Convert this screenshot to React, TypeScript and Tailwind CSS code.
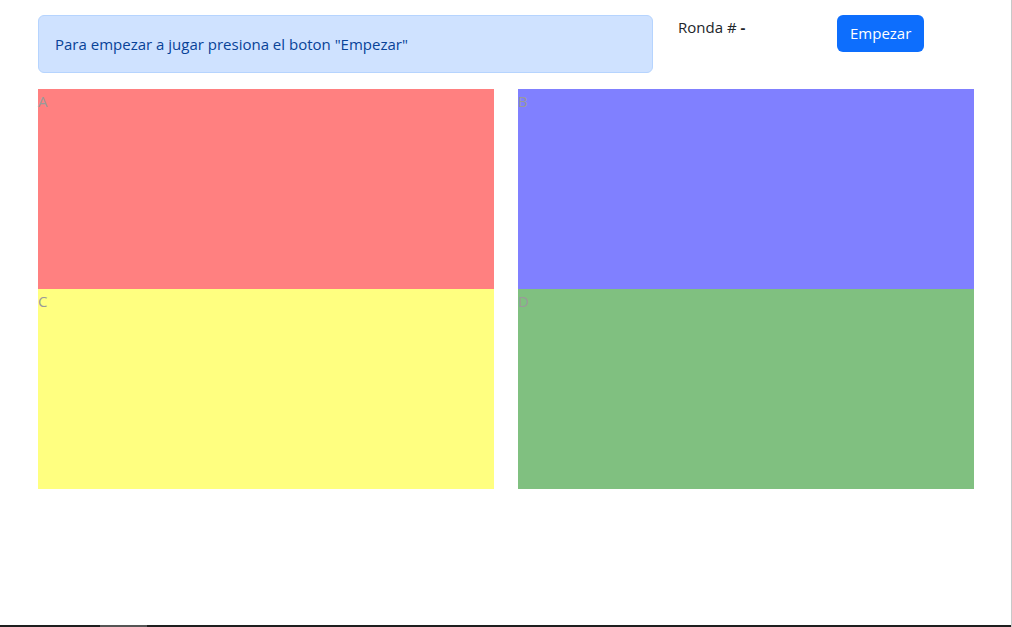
import React from 'react';

const squares = [
  { label: 'A', color: 'bg-[#ff8080]' },
  { label: 'B', color: 'bg-[#8080ff]' },
  { label: 'C', color: 'bg-[#ffff80]' },
  { label: 'D', color: 'bg-[#80c080]' },
];

export default function App() {
  return (
    <div
      className="w-[1012px] h-[627px] bg-white overflow-hidden flex flex-col border-r border-[#c8c8c8]"
      style={{ fontFamily: '"Open Sans", "Noto Sans", sans-serif' }}
    >
      <div className="pl-[38px] pt-[15px] w-[974px]">
        {/* header */}
        <div className="flex items-start">
          <div className="w-[615px] h-[58px] flex items-center px-4 rounded-md bg-[#cfe2ff] border border-[#b6d4fe] text-[#084298] text-[15px]">
            Para empezar a jugar presiona el boton "Empezar"
          </div>
          <div className="ml-[25px] w-[159px] text-[15px] text-[#212529] leading-6">
            Ronda # <b className="font-bold">-</b>
          </div>
          <button className="h-[37px] px-[13px] rounded-md bg-[#0d6efd] text-white text-[15px]">
            Empezar
          </button>
        </div>

        {/* board */}
        <div className="mt-[16px] grid grid-cols-[456px_456px] gap-x-[24px]">
          {squares.map((s) => (
            <div key={s.label} className={`h-[200px] ${s.color} text-[#9a9a9a] text-[15px] leading-6`}>
              {s.label}
            </div>
          ))}
        </div>
      </div>

      {/* window bottom edge */}
      <div className="mt-auto h-[2px] bg-[#1e1e1e] flex">
        <div className="ml-[100px] w-[47px] bg-[#555]" />
      </div>
    </div>
  );
}
